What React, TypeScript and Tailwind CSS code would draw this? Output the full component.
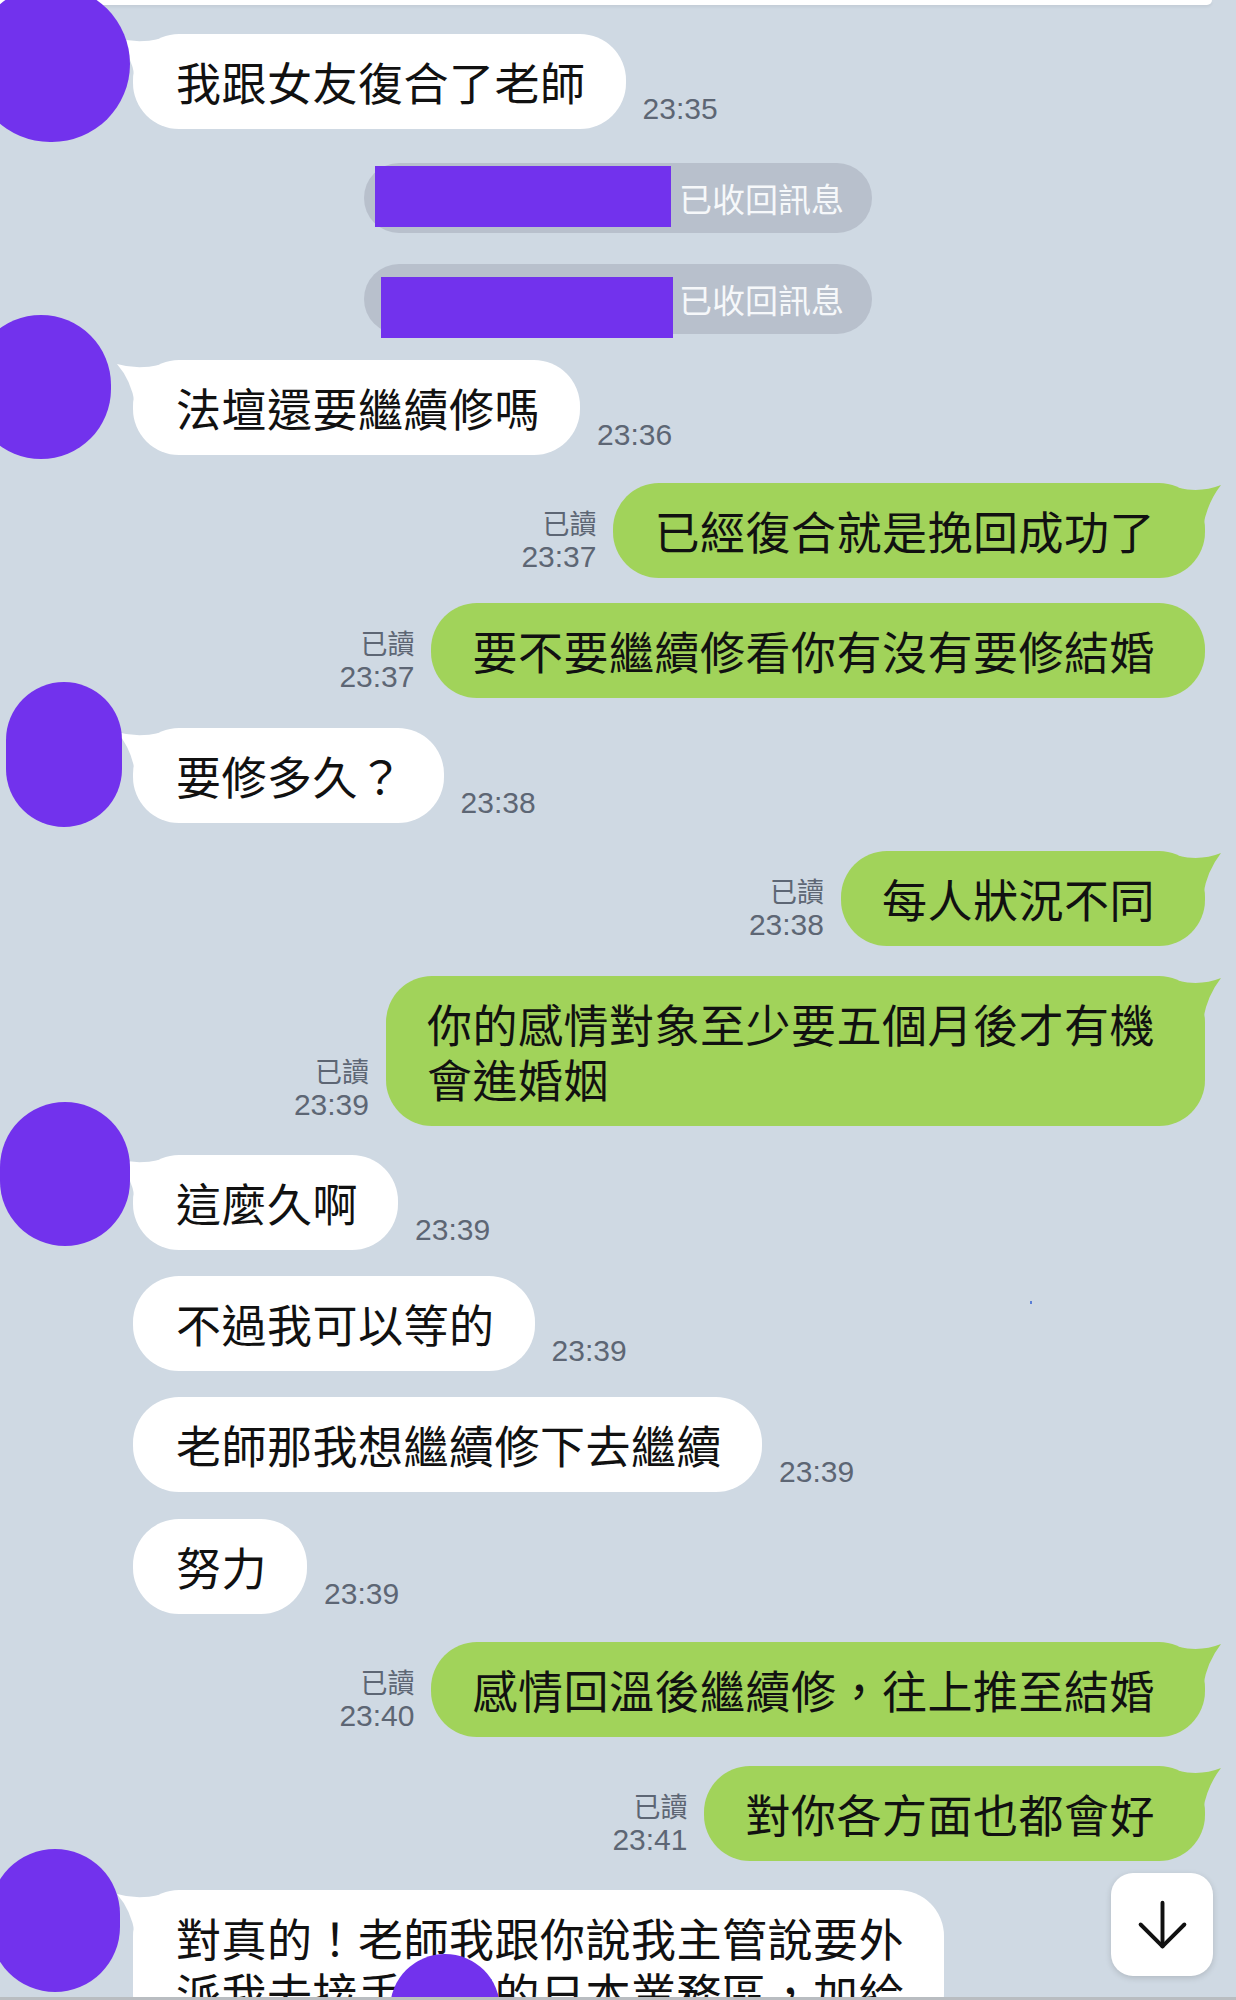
import React from 'react';
import { ArrowDown } from 'lucide-react';

type Msg = {
  kind: 'in' | 'out' | 'recall';
  lines?: string[];
  time?: string;
  tail?: boolean;
  mt: string;
  avatar?: string;
  cover?: string;
};

const messages: Msg[] = [
  { kind: 'in', lines: ['我跟女友復合了老師'], time: '23:35', tail: true, mt: 'mt-[29px]', avatar: 'left-[-28px] top-[-48px] w-[158px] h-[156px]' },
  { kind: 'recall', mt: 'mt-[34px]', cover: 'left-[11px] top-[3px] w-[296px] h-[61px]' },
  { kind: 'recall', mt: 'mt-[31px]', cover: 'left-[17px] top-[13px] w-[292px] h-[61px]' },
  { kind: 'in', lines: ['法壇還要繼續修嗎'], time: '23:36', tail: true, mt: 'mt-[26px]', avatar: 'left-[-29px] top-[-45px] w-[140px] h-[144px]' },
  { kind: 'out', lines: ['已經復合就是挽回成功了'], time: '23:37', tail: true, mt: 'mt-[28px]' },
  { kind: 'out', lines: ['要不要繼續修看你有沒有要修結婚'], time: '23:37', mt: 'mt-[25px]' },
  { kind: 'in', lines: ['要修多久？'], time: '23:38', tail: true, mt: 'mt-[30px]', avatar: 'left-[6px] top-[-46px] w-[116px] h-[145px]' },
  { kind: 'out', lines: ['每人狀況不同'], time: '23:38', tail: true, mt: 'mt-[28px]' },
  { kind: 'out', lines: ['你的感情對象至少要五個月後才有機', '會進婚姻'], time: '23:39', tail: true, mt: 'mt-[30px]' },
  { kind: 'in', lines: ['這麼久啊'], time: '23:39', tail: true, mt: 'mt-[29px]', avatar: 'left-0 top-[-53px] w-[130px] h-[144px]' },
  { kind: 'in', lines: ['不過我可以等的'], time: '23:39', mt: 'mt-[26px]' },
  { kind: 'in', lines: ['老師那我想繼續修下去繼續'], time: '23:39', mt: 'mt-[26px]' },
  { kind: 'in', lines: ['努力'], time: '23:39', mt: 'mt-[27px]' },
  { kind: 'out', lines: ['感情回溫後繼續修，往上推至結婚'], time: '23:40', tail: true, mt: 'mt-[28px]' },
  { kind: 'out', lines: ['對你各方面也都會好'], time: '23:41', tail: true, mt: 'mt-[29px]' },
  { kind: 'in', lines: ['對真的！老師我跟你說我主管說要外', '派我去接手東京的日本業務區，加給'], tail: true, mt: 'mt-[29px]', avatar: 'left-[-10px] top-[-41px] w-[130px] h-[143px]', cover: 'left-[257px] top-[64px] w-[110px] h-[110px] rounded-full' },
];

const LeftTail = () => (
  <svg className="absolute left-[-18px] top-0" width="44" height="44" viewBox="0 0 44 44">
    <path d="M2 4 Q 22 10 44 5 L 44 44 L 20 44 Q 16 20 2 4 Z" fill="#ffffff" />
  </svg>
);

const RightTail = () => (
  <svg className="absolute right-[-18px] top-0" width="44" height="44" viewBox="0 0 44 44">
    <path d="M42 2 Q 22 10 0 5 L 0 44 L 24 44 Q 28 20 42 2 Z" fill="#a1d35a" />
  </svg>
);

const App = () => {
  return (
    <div className="relative h-[2000px] w-[1236px] overflow-hidden bg-[#cfd9e3] font-['Noto_Sans_CJK_TC','Noto_Sans',sans-serif]">
      {/* header edge */}
      <div className="h-[5px] w-[1212px] rounded-br-[10px] bg-white shadow-[0_2px_3px_rgba(0,0,0,0.06)]" />

      <div className="flex flex-col">
        {messages.map((m, i) => {
          if (m.kind === 'recall') {
            return (
              <div key={i} className={`flex justify-center ${m.mt}`}>
                <div className="relative flex h-[70px] w-[508px] items-center justify-end rounded-full bg-[#b8c0cc] pr-[28px]">
                  <div className={`absolute bg-[#7232ed] ${m.cover}`} />
                  <span className="text-[33px] leading-none text-[#f6f8fa]">已收回訊息</span>
                </div>
              </div>
            );
          }

          if (m.kind === 'in') {
            return (
              <div key={i} className={`relative flex items-end pl-[133px] ${m.mt}`}>
                {m.avatar && <div className={`absolute z-10 rounded-full bg-[#7232ed] ${m.avatar}`} />}
                <div className="relative whitespace-nowrap rounded-[46px] bg-white py-[20px] pl-[43px] pr-[40px] text-[45px] leading-[55px] tracking-[0.5px] text-[#111111]">
                  {m.tail && <LeftTail />}
                  {m.lines!.map((l, j) => (
                    <div key={j} className="relative">{l}</div>
                  ))}
                  {m.cover && <div className={`absolute bg-[#7232ed] ${m.cover}`} />}
                </div>
                {m.time && (
                  <span className="mb-[3px] ml-[17px] font-['Liberation_Sans',Arial,sans-serif] text-[30px] leading-[34px] text-[#5d6674]">
                    {m.time}
                  </span>
                )}
              </div>
            );
          }

          return (
            <div key={i} className={`flex items-end justify-end pr-[31px] ${m.mt}`}>
              <div className="mb-[4px] mr-[17px] flex flex-col items-end text-[#5d6674]">
                <span className="text-[27px] leading-[34px]">已讀</span>
                <span className="font-['Liberation_Sans',Arial,sans-serif] text-[30px] leading-[34px]">{m.time}</span>
              </div>
              <div className="relative whitespace-nowrap rounded-[46px] bg-[#a1d35a] py-[20px] pl-[41px] pr-[50px] text-[45px] leading-[55px] tracking-[0.5px] text-[#111111]">
                {m.tail && <RightTail />}
                {m.lines!.map((l, j) => (
                  <div key={j} className="relative">{l}</div>
                ))}
              </div>
            </div>
          );
        })}
      </div>

      {/* stray dot */}
      <div className="absolute left-[1030px] top-[1301px] h-[3px] w-[2px] bg-[#5b7fd6]" />

      {/* scroll to bottom button */}
      <div className="absolute left-[1111px] top-[1873px] flex h-[103px] w-[102px] items-center justify-center rounded-[22px] bg-white shadow-[0_2px_6px_rgba(0,0,0,0.15)]">
        <ArrowDown size={75} strokeWidth={1.25} color="#111111" />
      </div>

      <div className="absolute bottom-0 left-0 h-[3px] w-full bg-[#b9bdc1]" />
    </div>
  );
};

export default App;
